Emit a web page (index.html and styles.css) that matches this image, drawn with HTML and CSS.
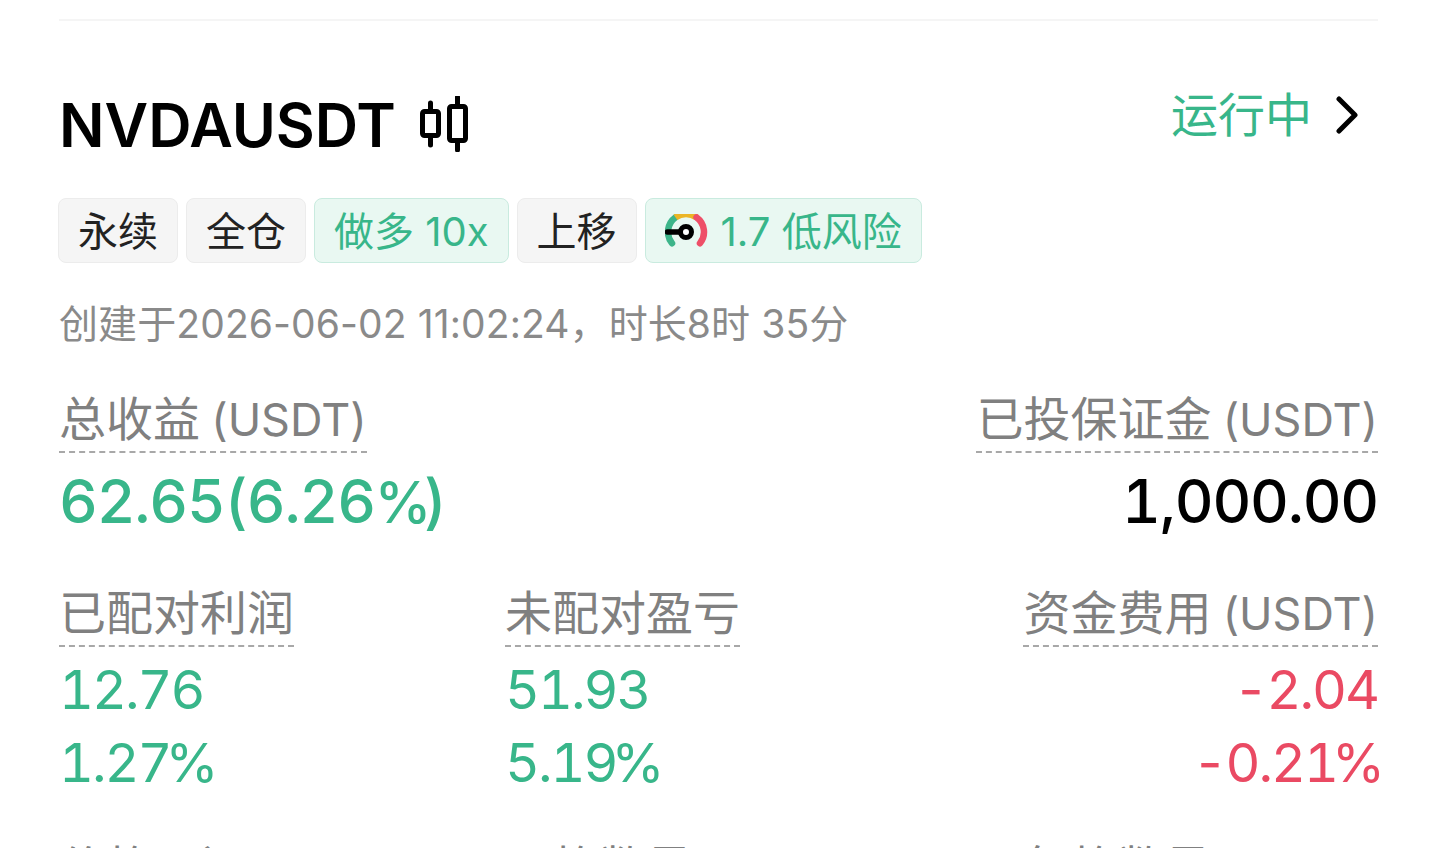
FILE: index.html
```html
<!DOCTYPE html>
<html lang="zh-CN">
	<head>
		<meta charset="UTF-8" />
		<title>NVDAUSDT</title>
		<link rel="stylesheet" href="styles.css">
	</head>
	<body>
		<div class="page">
			<div class="divider"></div>

			<div class="title-row">
				<div class="title">
					<h1>NVDAUSDT</h1>
					<svg class="candle-icon" width="50" height="56" viewBox="0 0 50 56" fill="none" stroke="#000" stroke-width="5">
						<rect x="3.500" y="15.500" width="16" height="24" rx="2" />
						<rect x="30.500" y="10.500" width="16" height="34" rx="2" />
						<path d="M11.500 7v8M11.500 40v9M38.500 1v9M38.500 45v9" stroke-linecap="round" />
					</svg>
				</div>
				<div class="status">
					<span>运行中</span>
					<svg width="22" height="38" viewBox="0 0 22 38" fill="none" stroke="#000" stroke-width="5" stroke-linecap="round" stroke-linejoin="round">
						<path d="M3 3l16 16L3 35" />
					</svg>
				</div>
			</div>

			<div class="tags">
				<span class="tag">永续</span>
				<span class="tag">全仓</span>
				<span class="tag tag-green">做多 10x</span>
				<span class="tag">上移</span>
				<span class="tag tag-green tag-risk">
					<svg class="gauge" width="44" height="36" viewBox="0 0 44 36" fill="none" stroke-width="6.500">
						<path d="M7 29.300A18 18 0 0 1 10.500 3.400" stroke="#3db58a" stroke-linecap="round" />
						<path d="M10.500 3.400A18 18 0 0 1 31.500 3.400" stroke="#ecb526" />
						<path d="M31.500 3.400A18 18 0 0 1 35 29.300" stroke="#ee4f68" stroke-linecap="round" />
						<path d="M2.500 18h18" stroke="#000" stroke-width="5.500" stroke-linecap="round" />
						<circle cx="21" cy="18" r="5.500" fill="#fff" stroke="#000" stroke-width="5" />
					</svg>
					1.7 低风险
				</span>
			</div>

			<p class="created">创建于2026-06-02 11:02:24，时长8时 35分</p>

			<div class="summary">
				<div class="cell">
					<span class="label">总收益 <span class="unit">(USDT)</span></span>
					<span class="big green">62.65(6.26<span class="big-sign">%</span>)</span>
				</div>
				<div class="cell right">
					<span class="label">已投保证金 <span class="unit">(USDT)</span></span>
					<span class="big">1,000.00</span>
				</div>
			</div>

			<div class="stats">
				<div class="cell">
					<span class="label">已配对利润</span>
					<span class="value first green">12.76</span>
					<span class="value green">1.27<span class="sign">%</span></span>
				</div>
				<div class="cell">
					<span class="label">未配对盈亏</span>
					<span class="value first green">51.93</span>
					<span class="value green">5.19<span class="sign">%</span></span>
				</div>
				<div class="cell right">
					<span class="label">资金费用 <span class="unit">(USDT)</span></span>
					<span class="value first red">-2.04</span>
					<span class="value red">-0.21<span class="sign">%</span></span>
				</div>
			</div>

			<div class="stats stats-next">
				<div class="cell">
					<span class="label">价格区间</span>
				</div>
				<div class="cell">
					<span class="label">网格数量</span>
				</div>
				<div class="cell right">
					<span class="label">每格数量 <span class="unit">(USDT)</span></span>
				</div>
			</div>
		</div>
	</body>
</html>
```

FILE: styles.css
```css
* {
	box-sizing: border-box;
	margin: 0;
	padding: 0;
}

html,
body {
	height: 848px;
	overflow: hidden;
}

body {
	font-family: "Inter", "Noto Sans CJK SC", sans-serif;
	background-color: #fff;
	color: #000;
}

.page {
	padding: 19px 60px 0 59px;
}

.divider {
	height: 2px;
	background-color: #f5f5f5;
}

.title-row {
	display: flex;
	justify-content: space-between;
	align-items: flex-start;
	margin-top: 64px;
	padding-right: 20px;
}

.title {
	display: flex;
	align-items: center;
	gap: 23px;
}

h1 {
	padding-top: 2px;
	font-size: 60px;
	font-weight: 600;
	line-height: 76px;
}

.status {
	display: flex;
	align-items: center;
	gap: 24px;
	color: #38b68a;
	font-size: 47px;
	line-height: 60px;
}

.tags {
	display: flex;
	gap: 8px;
	margin: 35px 0 0 -1px;
}

.tag {
	display: flex;
	align-items: center;
	height: 65px;
	padding: 0 19px 4px;
	font-size: 40px;
	color: #222;
	background-color: #f5f5f5;
	border: 1px solid #ececec;
	border-radius: 8px;
}

.tag-green {
	color: #38b68a;
	background-color: #e9f8f2;
	border-color: #c9ebdf;
}

.tag-risk {
	gap: 12px;
}

.gauge {
	margin-top: 7px;
}

.created {
	margin-top: 35px;
	font-size: 39px;
	line-height: 52px;
	letter-spacing: 0.1px;
	color: #8a8a8a;
}

.summary {
	display: flex;
	justify-content: space-between;
	margin-top: 37px;
}

.stats {
	display: grid;
	grid-template-columns: 446px 1fr auto;
	margin-top: 44px;
}

.stats-next {
	margin-top: 37px;
}

.cell {
	display: flex;
	flex-direction: column;
	align-items: flex-start;
}

.right {
	align-items: flex-end;
}

.label {
	padding-bottom: 1px;
	font-size: 47px;
	line-height: 63px;
	color: #808080;
	border-bottom: 2px dashed #a8a8a8;
}

.unit {
	margin-left: -2px;
	font-size: 45px;
	line-height: 1;
}

.big {
	margin-top: 12px;
	font-size: 60px;
	font-weight: 500;
	line-height: 72px;
	letter-spacing: -1.200px;
	font-variant-numeric: tabular-nums;
}

.big-sign {
	font-size: 57px;
	line-height: 1;
	letter-spacing: -8px;
}

.value {
	font-size: 54px;
	line-height: 73px;
	letter-spacing: -2px;
	font-variant-numeric: tabular-nums;
}

.sign {
	margin: 0 -5px 0 -5px;
}

.first {
	margin-top: 6px;
}

.green {
	color: #38b68a;
}

.red {
	color: #ea4a63;
}
```
